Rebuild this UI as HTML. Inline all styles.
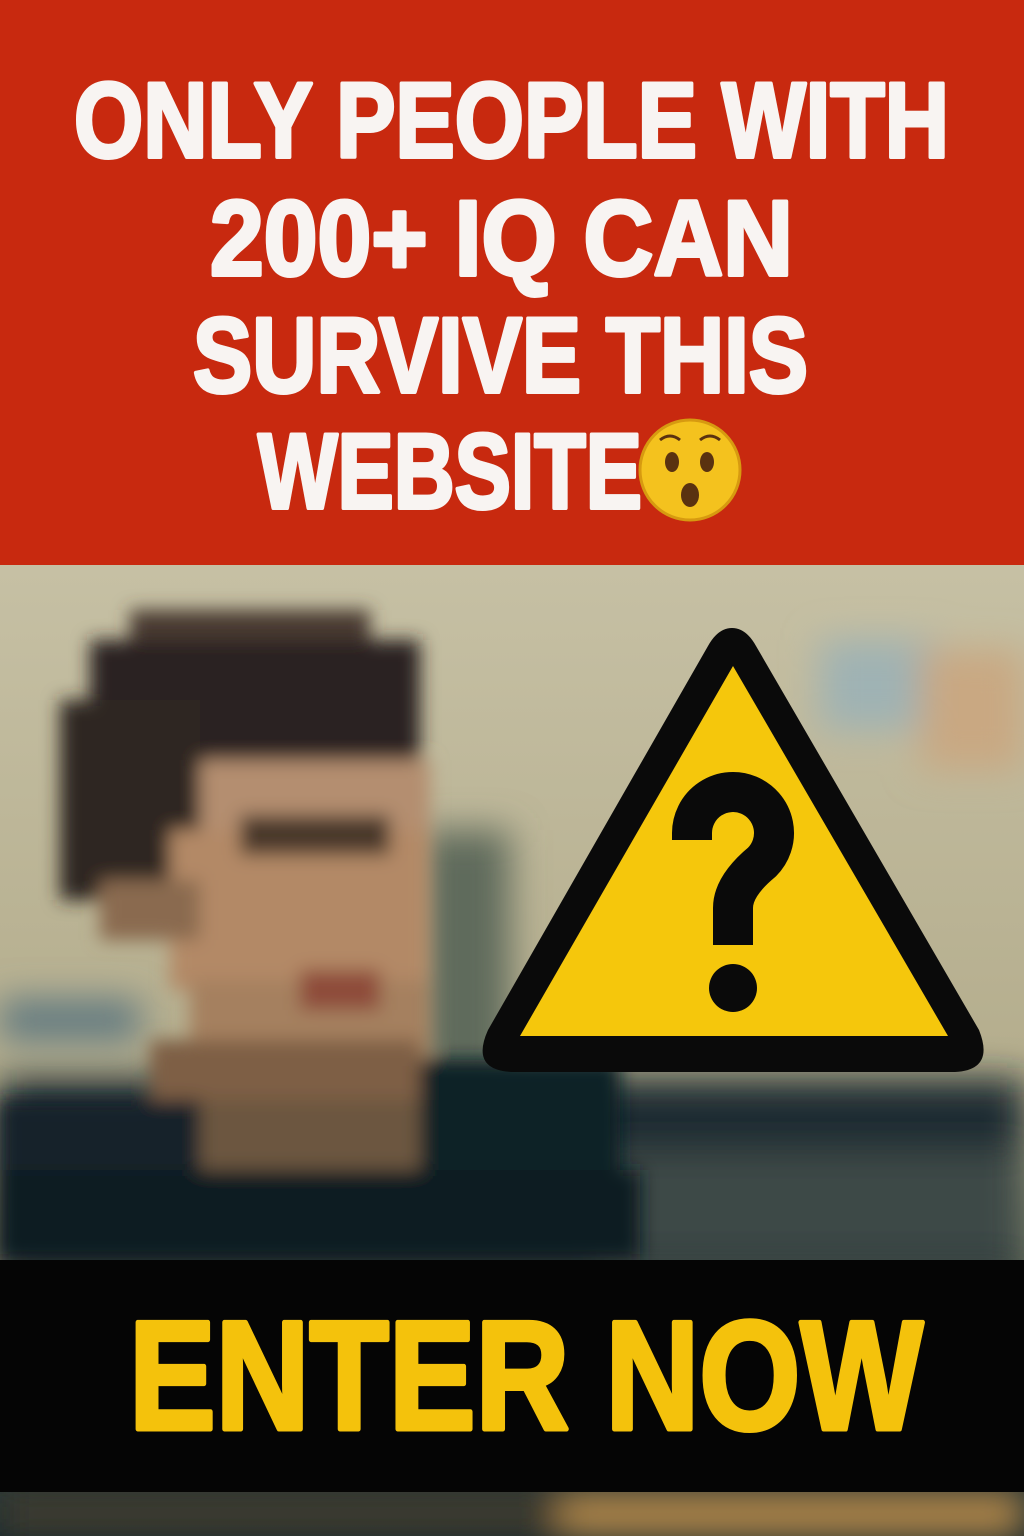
<!DOCTYPE html>
<html><head><meta charset="utf-8"><style>
html,body{margin:0;padding:0;width:1024px;height:1536px;overflow:hidden;background:#000}
</style></head><body>
<svg width="1024" height="1536" viewBox="0 0 1024 1536" xmlns="http://www.w3.org/2000/svg">
<defs>
<filter id="b" x="-20%" y="-20%" width="140%" height="140%"><feGaussianBlur stdDeviation="18"/></filter>
<filter id="b2" x="-20%" y="-20%" width="140%" height="140%"><feGaussianBlur stdDeviation="9"/></filter>
<linearGradient id="bg" x1="0" y1="0" x2="0" y2="1">
<stop offset="0" stop-color="#c6c0a4"/><stop offset="0.5" stop-color="#b5ae8e"/><stop offset="0.72" stop-color="#6f7560"/><stop offset="1" stop-color="#1b2a2e"/>
</linearGradient>
</defs>
<rect x="0" y="0" width="1024" height="565" fill="#c8290f"/>
<rect x="0" y="565" width="1024" height="971" fill="url(#bg)"/>
<g filter="url(#b)">
<rect x="0" y="1000" width="140" height="40" fill="#5d7780"/>
<rect x="420" y="830" width="90" height="250" fill="#5e6a5c"/>
<rect x="820" y="640" width="120" height="90" fill="#9fb2b4"/>
<rect x="920" y="650" width="104" height="120" fill="#c9a882"/>
<rect x="640" y="1090" width="300" height="60" fill="#b6916a"/>
<rect x="900" y="1100" width="124" height="160" fill="#2f4a4c"/>
<rect x="0" y="1080" width="1024" height="200" fill="#1a2b30"/>
<rect x="600" y="1150" width="424" height="110" fill="#3e4a46"/>
<rect x="0" y="1490" width="1024" height="46" fill="#3d3a2e"/>
<rect x="560" y="1495" width="464" height="41" fill="#b98c4c"/>
</g>
<g filter="url(#b2)">
<rect x="130" y="610" width="240" height="40" fill="#4a3a30"/>
<rect x="90" y="640" width="330" height="120" fill="#2a2320"/>
<rect x="60" y="700" width="140" height="200" fill="#2e2622"/>
<rect x="200" y="760" width="230" height="80" fill="#b48e70"/>
<rect x="170" y="830" width="260" height="160" fill="#b38966"/>
<rect x="240" y="815" width="150" height="40" fill="#4a382c"/>
<rect x="100" y="880" width="100" height="60" fill="#8a6a50"/>
<rect x="190" y="980" width="240" height="80" fill="#a5805f"/>
<rect x="300" y="970" width="80" height="40" fill="#8e4b3a"/>
<rect x="150" y="1040" width="270" height="70" fill="#7e5e44"/>
<rect x="200" y="1100" width="220" height="70" fill="#6c5640"/>
<rect x="0" y="1100" width="200" height="160" fill="#14232a"/>
<rect x="420" y="1060" width="200" height="200" fill="#102128"/>
<rect x="0" y="1170" width="640" height="90" fill="#0c1a20"/>
</g>
<rect x="0" y="1260" width="1024" height="232" fill="#050505"/>
<path d="M732 628 Q746 628 756 646 L979 1030 Q995 1070 955 1072 L512 1072 Q470 1070 488 1030 L708 646 Q718 628 732 628 Z" fill="#0a0a0a"/>
<path d="M733 666 L948 1036 L520 1036 Z" fill="#f5c70c"/>
<path d="M692 840 L692 833 A41 41 0 1 1 762 862 Q733 886 733 908 L733 945" fill="none" stroke="#0a0a0a" stroke-width="40"/>
<circle cx="733" cy="988" r="24" fill="#0a0a0a"/>
<g font-family="Liberation Sans, sans-serif" font-weight="bold" fill="#f8f4f2" stroke="#f8f4f2" stroke-width="4" stroke-linejoin="round">
<text x="74" y="157" font-size="107" textLength="875" lengthAdjust="spacingAndGlyphs">ONLY PEOPLE WITH</text>
<text x="210" y="275" font-size="107" textLength="583" lengthAdjust="spacingAndGlyphs">200+ IQ CAN</text>
<text x="193" y="392" font-size="107" textLength="615" lengthAdjust="spacingAndGlyphs">SURVIVE THIS</text>
<text x="258" y="508" font-size="107" textLength="384" lengthAdjust="spacingAndGlyphs">WEBSITE</text>
</g>
<circle cx="690" cy="470" r="50" fill="#f4c21e"/>
<circle cx="690" cy="470" r="50" fill="none" stroke="#d79a10" stroke-width="3"/>
<ellipse cx="672" cy="462" rx="7" ry="10" fill="#5a3210"/>
<ellipse cx="707" cy="462" rx="7" ry="10" fill="#5a3210"/>
<path d="M660 440 Q670 432 680 440 M700 440 Q710 432 720 440" stroke="#5a3210" stroke-width="3" fill="none"/>
<ellipse cx="690" cy="495" rx="9" ry="12" fill="#5a3210"/>
<text x="129" y="1429" font-family="Liberation Sans, sans-serif" font-weight="bold" font-size="155" fill="#f4c20c" stroke="#f4c20c" stroke-width="5" stroke-linejoin="round" textLength="794" lengthAdjust="spacingAndGlyphs">ENTER NOW</text>
</svg>
</body></html>
